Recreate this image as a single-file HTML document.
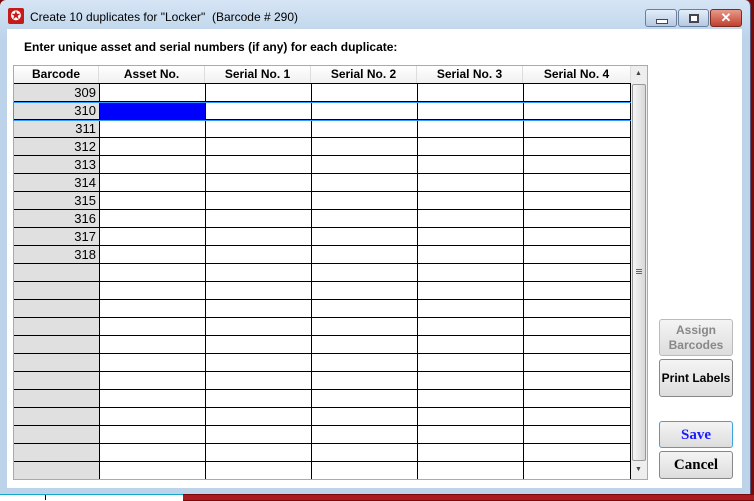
<!DOCTYPE html>
<html><head><style>
body{margin:0;width:754px;height:500px;overflow:hidden;background:#7a0a0a;font-family:"Liberation Sans",sans-serif;position:relative}
.a{position:absolute}
.hd{position:absolute;top:66px;height:17px;font-size:12px;font-weight:bold;text-align:center;line-height:17px;background:linear-gradient(#fff,#f0f0f0);border-right:1px solid #ddd}
.bc{position:absolute;left:14px;width:82px;text-align:right;font-size:13px;height:17px;line-height:18px}
.btn{position:absolute;left:659px;width:74px;border:1px solid #888;border-radius:3px;background:linear-gradient(#f4f4f4,#ddd);text-align:center;font-weight:bold;box-sizing:border-box}
</style></head><body>
<div class="a" style="left:0;top:0;width:750px;height:494px;background:linear-gradient(#d6e5f5,#bcd3ea 40px);border-radius:6px 6px 0 0;border-right:1px solid #557"></div>
<div class="a" style="left:8px;top:8px;width:16px;height:16px;background:#c41b1b;border-radius:2px;color:#fff;font-size:13px;line-height:16px;text-align:center">✪</div>
<div class="a" style="left:30px;top:10px;font-size:12px;color:#000">Create 10 duplicates for "Locker"&nbsp; (Barcode # 290)</div>
<div class="a" style="left:645px;top:9px;width:30px;height:16px;border:1px solid #6a7f9c;border-radius:3px;background:linear-gradient(#e4eefa,#b4c8e2)"><div class="a" style="left:10px;top:9px;width:10px;height:3px;background:#fff;border:1px solid #445"></div></div>
<div class="a" style="left:678px;top:9px;width:29px;height:16px;border:1px solid #6a7f9c;border-radius:3px;background:linear-gradient(#e4eefa,#b4c8e2)"><div class="a" style="left:10px;top:4px;width:6px;height:5px;border:2px solid #445;background:#fff"></div></div>
<div class="a" style="left:710px;top:9px;width:30px;height:16px;border:1px solid #7a2a20;border-radius:3px;background:linear-gradient(#e89a8a,#c2402e);color:#fff;font-weight:bold;font-size:13px;text-align:center;line-height:16px">✕</div>
<div class="a" style="left:7px;top:29px;width:735px;height:459px;background:#fff"></div>
<div class="a" style="left:24px;top:40px;font-size:12px;font-weight:bold">Enter unique asset and serial numbers (if any) for each duplicate:</div>
<div class="a" style="left:13px;top:65px;width:635px;height:415px;border:1px solid #aaa;box-sizing:border-box;background:#fff"></div>
<div class="hd" style="left:14px;width:84px">Barcode</div>
<div class="hd" style="left:99px;width:105px">Asset No.</div>
<div class="hd" style="left:205px;width:105px">Serial No. 1</div>
<div class="hd" style="left:311px;width:105px">Serial No. 2</div>
<div class="hd" style="left:417px;width:105px">Serial No. 3</div>
<div class="hd" style="left:523px;width:107px">Serial No. 4</div>
<div class="a" style="left:14px;top:84px;width:85px;height:395px;background:#e0e0e0"></div>
<div class="a" style="left:14px;top:83px;width:617px;height:396px;background:repeating-linear-gradient(to bottom,#000 0,#000 1px,transparent 1px,transparent 18px)"></div>
<div class="a" style="left:99px;top:83px;width:1px;height:396px;background:#000"></div>
<div class="a" style="left:205px;top:83px;width:1px;height:396px;background:#000"></div>
<div class="a" style="left:311px;top:83px;width:1px;height:396px;background:#000"></div>
<div class="a" style="left:417px;top:83px;width:1px;height:396px;background:#000"></div>
<div class="a" style="left:523px;top:83px;width:1px;height:396px;background:#000"></div>
<div class="a" style="left:630px;top:83px;width:1px;height:396px;background:#000"></div>
<div class="a" style="left:100px;top:103px;width:105px;height:17px;background:#0000ff"></div>
<div class="a" style="left:13px;top:102px;width:617px;height:17px;border:1px solid #3399ff"></div>
<div class="bc" style="top:84px">309</div><div class="bc" style="top:102px">310</div><div class="bc" style="top:120px">311</div><div class="bc" style="top:138px">312</div><div class="bc" style="top:156px">313</div><div class="bc" style="top:174px">314</div><div class="bc" style="top:192px">315</div><div class="bc" style="top:210px">316</div><div class="bc" style="top:228px">317</div><div class="bc" style="top:246px">318</div>
<div class="a" style="left:631px;top:66px;width:16px;height:413px;background:#eee"></div>
<div class="a" style="left:635px;top:70px;font-size:7px;color:#444">▲</div>
<div class="a" style="left:635px;top:466px;font-size:7px;color:#444">▼</div>
<div class="a" style="left:632px;top:84px;width:14px;height:377px;border:1px solid #999;border-radius:2px;box-sizing:border-box;background:linear-gradient(to right,#f6f6f6,#d8d8d8)"></div>
<div class="a" style="left:636px;top:269px;width:6px;height:5px;background:repeating-linear-gradient(#666 0,#666 1px,transparent 1px,transparent 2px)"></div>
<div class="btn" style="top:319px;height:37px;color:#888;font-size:12px;line-height:15px;padding-top:3px;border-color:#bbb">Assign<br>Barcodes</div>
<div class="btn" style="top:359px;height:38px;font-size:12px;line-height:36px">Print Labels</div>
<div class="btn" style="top:421px;height:27px;font-family:'Liberation Serif',serif;font-size:15px;color:#1a1aff;line-height:26px;border-color:#3ba3e0">Save</div>
<div class="btn" style="top:451px;height:28px;font-family:'Liberation Serif',serif;font-size:15px;line-height:27px">Cancel</div>
<div class="a" style="left:0;top:494px;width:183px;height:6px;background:#fff;border-top:1px solid #1ac"></div>
<div class="a" style="left:45px;top:495px;width:1px;height:5px;background:#000"></div>
<div class="a" style="left:183px;top:495px;width:571px;height:5px;background:#aa1a20"></div>
</body></html>
